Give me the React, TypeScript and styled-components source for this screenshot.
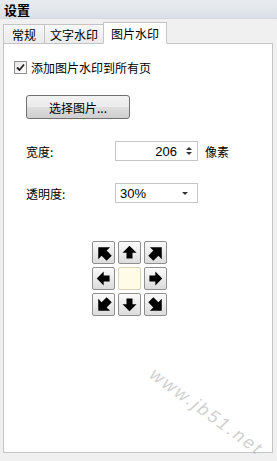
import React from 'react';
import styled, { createGlobalStyle } from 'styled-components';

const GlobalStyle = createGlobalStyle`
  html, body {
    margin: 0;
    padding: 0;
    background: #f0f0f0;
  }
  body {
    font-family: "Noto Sans CJK SC", "Liberation Sans", sans-serif;
    font-size: 12px;
    color: #000;
  }
`;

const Window = styled.div`
  width: 277px;
  height: 461px;
  display: flex;
  flex-direction: column;
  background: #f0f0f0;
  overflow: hidden;
  position: relative;
`;

const TitleBar = styled.div`
  height: 18px;
  display: flex;
  align-items: center;
  padding-left: 4px;
  font-size: 13px;
  font-weight: bold;
  background: linear-gradient(#e9edf1, #dae0e6);
  border-bottom: 1px solid #d3d8dd;
`;

const TabStrip = styled.div`
  display: flex;
  align-items: flex-end;
  height: 23px;
  padding-left: 3px;
  margin-top: 1px;
  position: relative;
  z-index: 1;
`;

const Tab = styled.div<{ $active?: boolean; $w: number }>`
  width: ${p => p.$w}px;
  height: ${p => (p.$active ? '22px' : '20px')};
  display: flex;
  align-items: center;
  justify-content: center;
  font-size: 12px;
  box-sizing: border-box;
  border: 1px solid #c4c4c4;
  border-bottom: ${p => (p.$active ? '1px solid #fff' : '1px solid #c4c4c4')};
  margin-left: -1px;
  background: ${p => (p.$active ? '#fff' : 'linear-gradient(#f7f7f7, #ebebeb)')};
  margin-bottom: -1px;

  &:first-child {
    margin-left: 0;
  }
`;

const Panel = styled.div`
  margin: 0 4px 0 3px;
  height: 410px;
  background: #fff;
  border: 1px solid #c4c4c4;
  box-sizing: border-box;
  padding: 15px 0 0 10px;
  display: flex;
  flex-direction: column;
`;

const CheckRow = styled.label`
  display: flex;
  align-items: center;
  gap: 4px;
  height: 16px;
`;

const CheckBox = styled.span`
  width: 11px;
  height: 11px;
  border: 1px solid #8e8f8f;
  background: linear-gradient(135deg, #e6e6e6, #fff);
  display: flex;
  align-items: center;
  justify-content: center;
`;

const PushButton = styled.div`
  margin: 20px 0 0 12px;
  width: 104px;
  height: 24px;
  box-sizing: border-box;
  border: 1px solid #707070;
  border-radius: 3px;
  background: linear-gradient(#f2f2f2 0%, #ebebeb 50%, #dddddd 51%, #cfcfcf 100%);
  display: flex;
  align-items: center;
  justify-content: center;
  font-size: 12px;
`;

const FieldRow = styled.div<{ $top: number }>`
  display: flex;
  align-items: center;
  margin-top: ${p => p.$top}px;
  padding-left: 12px;
  height: 20px;
`;

const FieldLabel = styled.div`
  width: 89px;
  font-size: 12px;
`;

const SpinBox = styled.div`
  width: 83px;
  height: 20px;
  box-sizing: border-box;
  border: 1px solid #c5c5c5;
  display: flex;
  align-items: center;
  justify-content: flex-end;
  font-family: "Liberation Sans", sans-serif;
  font-size: 13px;
`;

const SpinArrows = styled.div`
  width: 16px;
  display: flex;
  flex-direction: column;
  align-items: center;
  justify-content: center;
  gap: 2px;
  margin-left: 4px;
`;

const Unit = styled.div`
  margin-left: 7px;
  font-size: 12px;
`;

const Combo = styled.div`
  width: 83px;
  height: 20px;
  box-sizing: border-box;
  border: 1px solid #c5c5c5;
  display: flex;
  align-items: center;
  justify-content: space-between;
  padding: 0 9px 0 4px;
  font-family: "Liberation Sans", sans-serif;
  font-size: 13px;
`;

const ArrowGrid = styled.div`
  margin: 38px 0 0 78px;
  display: grid;
  grid-template-columns: repeat(3, 23px);
  grid-auto-rows: 23px;
  gap: 3px;
`;

const ArrowButton = styled.div<{ $center?: boolean }>`
  box-sizing: border-box;
  border: 1px solid ${p => (p.$center ? '#d8d2b8' : '#8f8f8f')};
  border-radius: 2px;
  background: ${p =>
    p.$center ? '#fffbe6' : 'linear-gradient(#fbfbfb 0%, #ececec 50%, #dcdcdc 100%)'};
  display: flex;
  align-items: center;
  justify-content: center;
`;

const Watermark = styled.div`
  position: absolute;
  left: 158px;
  top: 364px;
  transform: rotate(36deg);
  transform-origin: left top;
  font-family: "Liberation Sans", sans-serif;
  font-style: italic;
  font-size: 18px;
  color: rgba(160, 160, 160, 0.5);
  letter-spacing: 2.3px;
  white-space: nowrap;
`;

const Arrow = ({ angle }: { angle: number }) => {
  const size = angle % 90 === 0 ? 15 : 18;
  return (
    <svg width={size} height={size} viewBox="0 0 16 16" style={{ transform: `rotate(${angle}deg)` }}>
      <path d="M8 0.8 L15.5 8.2 L11.2 8.2 L11.2 14.5 L4.8 14.5 L4.8 8.2 L0.5 8.2 Z" fill="#000" />
    </svg>
  );
};

const arrows: (number | null)[] = [-45, 0, 45, -90, null, 90, -135, 180, 135];

export default function App() {
  return (
    <Window>
      <GlobalStyle />
      <TitleBar>设置</TitleBar>
      <TabStrip>
        <Tab $w={42}>常规</Tab>
        <Tab $w={60}>文字水印</Tab>
        <Tab $w={64} $active>图片水印</Tab>
      </TabStrip>
      <Panel>
        <CheckRow>
          <CheckBox>
            <svg width="9" height="9" viewBox="0 0 9 9">
              <path d="M1 4.5 L3.5 7 L8 1.5" stroke="#222" strokeWidth="1.8" fill="none" />
            </svg>
          </CheckBox>
          添加图片水印到所有页
        </CheckRow>
        <PushButton>选择图片...</PushButton>
        <FieldRow $top={22}>
          <FieldLabel>宽度:</FieldLabel>
          <SpinBox>
            206
            <SpinArrows>
              <svg width="6" height="3" viewBox="0 0 6 3"><path d="M0 3 L3 0 L6 3 Z" fill="#333" /></svg>
              <svg width="6" height="3" viewBox="0 0 6 3"><path d="M0 0 L3 3 L6 0 Z" fill="#333" /></svg>
            </SpinArrows>
          </SpinBox>
          <Unit>像素</Unit>
        </FieldRow>
        <FieldRow $top={22}>
          <FieldLabel>透明度:</FieldLabel>
          <Combo>
            30%
            <svg width="6" height="3" viewBox="0 0 6 3"><path d="M0 0 L3 3 L6 0 Z" fill="#333" /></svg>
          </Combo>
        </FieldRow>
        <ArrowGrid>
          {arrows.map((a, i) =>
            a === null ? <ArrowButton key={i} $center /> : (
              <ArrowButton key={i}>
                <Arrow angle={a} />
              </ArrowButton>
            )
          )}
        </ArrowGrid>
      </Panel>
      <Watermark>www.jb51.net</Watermark>
    </Window>
  );
}
